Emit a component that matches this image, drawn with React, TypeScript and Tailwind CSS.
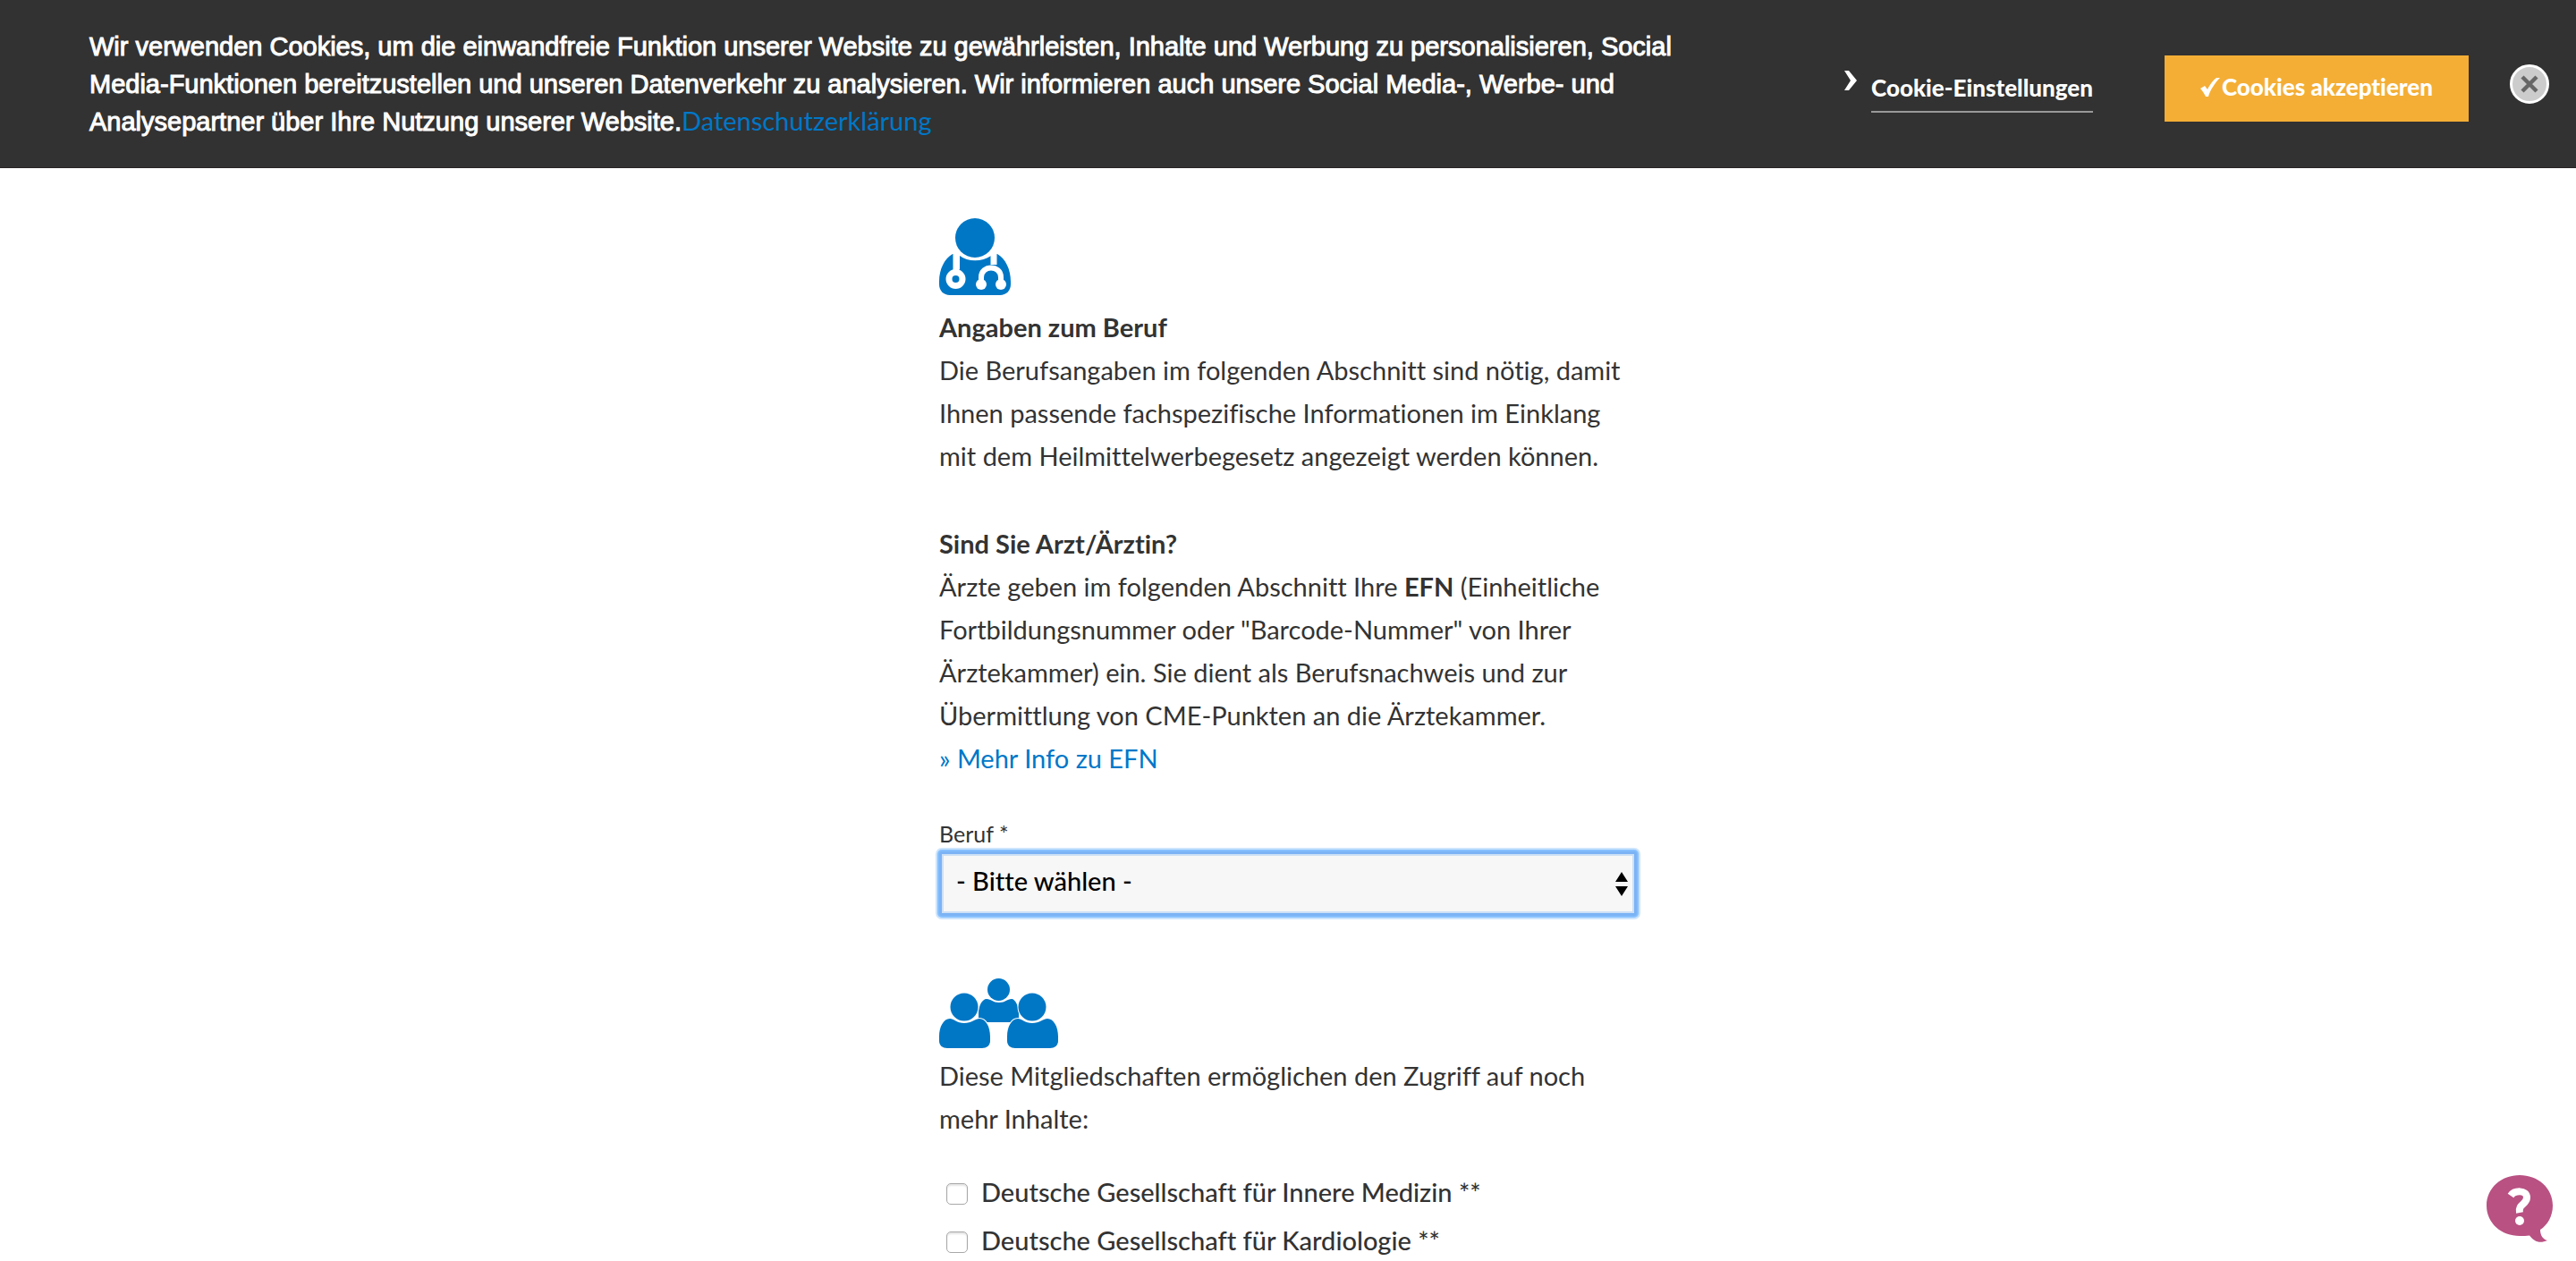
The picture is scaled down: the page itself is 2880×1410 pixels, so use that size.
const societies = [
  { id: "dgim", label: "Deutsche Gesellschaft für Innere Medizin **" },
  { id: "dgk", label: "Deutsche Gesellschaft für Kardiologie **" },
];

function DoctorIcon() {
  return (
    <svg viewBox="0 0 80 86" className="h-[86px] w-20" aria-hidden="true">
      <circle cx="40" cy="22" r="22" fill="#0077c5" />
      <path
        d="M15 40C6 45 0 57 0 71v3c0 7 5 12 12 12h56c7 0 12-5 12-12v-3c0-14-6-26-15-31-1 0-2 0-2 1v9l-5-2v-6c-10 7-26 7-35 0v15h-6V41c0-1-1-1-2-1z"
        fill="#0077c5"
      />
      <path d="M19 38v22M61 38v14" stroke="#fff" strokeWidth="7" />
      <circle cx="18.500" cy="68" r="7.500" fill="#0077c5" stroke="#fff" strokeWidth="7" />
      <path d="M47 74v-8c0-14 22-14 22 0v8" fill="none" stroke="#fff" strokeWidth="6" />
      <circle cx="47" cy="74" r="6" fill="#fff" />
      <circle cx="69" cy="74" r="6" fill="#fff" />
    </svg>
  );
}

function GroupIcon() {
  return (
    <svg viewBox="0 0 133 79" className="h-[79px] w-[133px]" aria-hidden="true" fill="#0077c5">
      <circle cx="66.500" cy="12.500" r="12.500" />
      <path d="M44 47V39c0-8 4-16 9-16 5 0 7 4 14 4s9-4 14-4c4 0 8 8 8 16v8c0 1-1 2-2 2H46c-1 0-2-1-2-2z" />
      <g stroke="#fff" strokeWidth="2" paintOrder="stroke">
        <path d="M12 45c4 0 8 5 16 5s13-5 17-5c7 0 12 9 12 20v5c0 5-4 8-9 8H9c-5 0-9-3-9-8v-5c0-11 5-20 12-20z" />
        <path d="M88 45c4 0 8 5 16 5s13-5 17-5c7 0 12 9 12 20v5c0 5-4 8-9 8H85c-5 0-9-3-9-8v-5c0-11 5-20 12-20z" />
        <circle cx="28" cy="32" r="15.500" />
        <circle cx="104" cy="32" r="15.500" />
      </g>
    </svg>
  );
}

function CookieBanner() {
  return (
    <header className="flex items-start border-b border-[#272324] bg-[#323232] pt-[31px] pr-[30px] pb-[30px] pl-[100px]">
      <div className="min-w-0 flex-1">
        <p className="max-w-[1820px] font-['Liberation_Sans',sans-serif] text-[29px] leading-[42px] text-white [-webkit-text-stroke:1px_white]">
          Wir verwenden Cookies, um die einwandfreie Funktion unserer Website zu gewährleisten, Inhalte
          und Werbung zu personalisieren, Social Media-Funktionen bereitzustellen und unseren
          Datenverkehr zu analysieren. Wir informieren auch unsere Social Media-, Werbe- und
          Analysepartner über Ihre Nutzung unserer Website.
          <a
            href="#datenschutz"
            className="font-['Lato',sans-serif] leading-none text-[#0077c8] [-webkit-text-stroke:0]"
          >
            Datenschutzerklärung
          </a>
        </p>
      </div>
      <div className="flex shrink-0 items-start pt-[31px] text-[26px] font-black text-white">
        <a href="#cookie-einstellungen" className="mr-20 flex items-start gap-4">
          <svg viewBox="0 0 14 22" className="mt-[17px] h-[22px] w-3.5" fill="#fff" aria-hidden="true">
            <path d="M0 0h5l9 11-9 11H0l7-11z" />
          </svg>
          <span className="mt-[18px] border-b-2 border-[#999] pb-2 leading-9">Cookie-Einstellungen</span>
        </a>
        <button
          type="button"
          className="mr-[46px] flex h-[74px] w-[340px] items-center justify-center gap-0.5 bg-[#f4ae35] pb-1"
        >
          <svg viewBox="0 0 22 21" className="h-[21px] w-[22px]" fill="#fff" aria-hidden="true">
            <path d="M0 12l5-3 3 4C11 7 15 2 18 0h4C16 6 11 14 9 21H6C4 17 2 14 0 12z" />
          </svg>
          <span>Cookies akzeptieren</span>
        </button>
        <button type="button" aria-label="Schließen" className="mt-2.5">
          <svg viewBox="0 0 44 44" className="size-11" aria-hidden="true">
            <circle cx="22" cy="22" r="20.500" fill="#ccc" stroke="#fff" strokeWidth="3" />
            <path d="M14 14l16 16M30 14L14 30" stroke="#666" strokeWidth="4.500" />
          </svg>
        </button>
      </div>
    </header>
  );
}

export default function App() {
  return (
    <div className="min-h-screen bg-white font-['Lato',sans-serif] text-[29px] leading-[48px] text-[#333] [font-variant-ligatures:none]">
      <CookieBanner />
      <main className="mx-auto w-full max-w-[780px] pt-14">
        <section>
          <DoctorIcon />
          <h2 className="mt-3 font-bold">Angaben zum Beruf</h2>
          <p>
            Die Berufsangaben im folgenden Abschnitt sind nötig, damit Ihnen passende fachspezifische
            Informationen im Einklang mit dem Heilmittelwerbegesetz angezeigt werden können.
          </p>
          <h2 className="mt-[50px] font-bold">Sind Sie Arzt/Ärztin?</h2>
          <p className="max-w-[750px]">
            Ärzte geben im folgenden Abschnitt Ihre <strong>EFN</strong> (Einheitliche
            Fortbildungsnummer oder "Barcode-Nummer" von Ihrer Ärztekammer) ein. Sie dient als
            Berufsnachweis und zur Übermittlung von CME-Punkten an die Ärztekammer.
          </p>
          <a href="#efn" className="text-[#0077c8]">
            » Mehr Info zu EFN
          </a>
        </section>

        <form>
          <label htmlFor="beruf" className="mt-10 block text-[25px] leading-10">
            Beruf *
          </label>
          <div className="relative">
            <select
              id="beruf"
              className="block h-[72px] w-full appearance-none rounded-[3px] border-3 border-[#7bb3f5] bg-[#f7f7f7] px-4 pb-1.5 font-medium text-black shadow-[0_0_0_2px_#86c0fe,0_0_0_4px_#cce4fd,inset_0_0_0_2px_#cde0f5] outline-none"
            >
              <option>- Bitte wählen -</option>
            </select>
            <svg
              viewBox="0 0 14 27"
              className="pointer-events-none absolute top-[23px] right-2.5 h-[27px] w-3.5"
              aria-hidden="true"
            >
              <path d="M7 0l7 11H0zM0 16h14L7 27z" fill="#000" />
            </svg>
          </div>

          <div className="mt-[70px]">
            <GroupIcon />
          </div>
          <p className="mt-1.5">
            Diese Mitgliedschaften ermöglichen den Zugriff auf noch mehr Inhalte:
          </p>

          <ul className="mt-[34px] flex flex-col gap-1.5">
            {societies.map((s) => (
              <li key={s.id} className="flex items-center gap-[15px] pl-2">
                <input
                  id={s.id}
                  type="checkbox"
                  className="mt-1 size-6 appearance-none rounded-[5px] border border-[#a8a8a8] bg-white shadow-[inset_0_2px_2px_#e4e4e4] checked:bg-[#0077c5]"
                />
                <label htmlFor={s.id} className="font-medium">
                  {s.label}
                </label>
              </li>
            ))}
          </ul>
        </form>
      </main>

      <button type="button" aria-label="Hilfe" className="fixed right-[26px] bottom-[21px]">
        <svg viewBox="0 0 74 75" className="h-[75px] w-[74px]" aria-hidden="true">
          <path
            d="M37 0C57 0 74 14 74 34c0 12-6 22-14 27 0 6 3 11 8 12-9 4-15 1-20-5.500-3 .500-7 .500-11 .500C17 68 0 54 0 34S17 0 37 0z"
            fill="#b95182"
          />
          <path d="M27 23c4-6 18-7 18 2 0 8-10 7-8 17" fill="none" stroke="#fff" strokeWidth="8" />
          <circle cx="37" cy="51" r="5" fill="#fff" />
        </svg>
      </button>
    </div>
  );
}
